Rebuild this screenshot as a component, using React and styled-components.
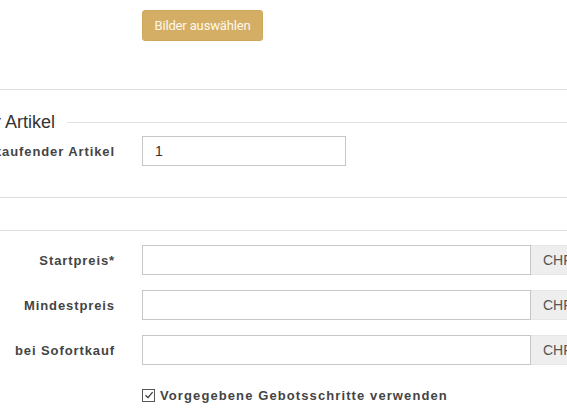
import styled, { createGlobalStyle } from "styled-components";

const GlobalStyle = createGlobalStyle`
  html, body {
    margin: 0;
    padding: 0;
    background: #fff;
    overflow: hidden;
  }
  body {
    font-family: "Liberation Sans", Arial, sans-serif;
    color: #333;
  }
`;

export default function App() {
  return (
    <>
      <GlobalStyle />
      <Page>
        <ButtonRow>
          <GoldButton type="button">Bilder auswählen</GoldButton>
        </ButtonRow>
        <Rule $top={48} />

        <Legend>
          <LegendText>Anzahl der Artikel</LegendText>
          <LegendLine />
        </Legend>
        <FieldRow $top={2}>
          <Label>Anzahl zu verkaufender Artikel</Label>
          <TextInput $width={204} defaultValue="1" />
        </FieldRow>

        <Rule $top={31} />
        <Rule $top={32} />

        <FieldRow $top={14}>
          <Label>Startpreis*</Label>
          <PriceField />
        </FieldRow>
        <FieldRow $top={15}>
          <Label>Mindestpreis</Label>
          <PriceField />
        </FieldRow>
        <FieldRow $top={15}>
          <Label>bei Sofortkauf</Label>
          <PriceField />
        </FieldRow>

        <CheckRow>
          <CheckBox>
            <svg width="10" height="10" viewBox="0 0 10 10">
              <path d="M1.5 5.2 L4 7.6 L8.6 2.2" fill="none" stroke="#333" strokeWidth="1.2" />
            </svg>
          </CheckBox>
          <CheckText>Vorgegebene Gebotsschritte verwenden</CheckText>
        </CheckRow>
      </Page>
    </>
  );
}

function PriceField() {
  return (
    <Group>
      <TextInput $width={389} />
      <Addon>CHF</Addon>
    </Group>
  );
}

const Page = styled.div`
  width: 567px;
  height: 411px;
  padding-top: 10px;
  box-sizing: border-box;
  overflow: hidden;
`;

const ButtonRow = styled.div`
  display: flex;
  padding-left: 142px;
`;

const GoldButton = styled.button`
  width: 121px;
  height: 31px;
  border: 1px solid #cfa75c;
  border-radius: 3px;
  background: #d5ae65;
  color: #fff8ea;
  font-family: Roboto, "Liberation Sans", sans-serif;
  font-size: 13px;
  letter-spacing: -0.15px;
  padding: 0;
`;

const Rule = styled.div`
  height: 1px;
  background: #dedede;
  margin-top: ${(p) => p.$top}px;
`;

const Legend = styled.div`
  display: flex;
  align-items: center;
  height: 24px;
  margin-top: 20px;
  margin-left: -120px;
`;

const LegendText = styled.div`
  width: 175px;
  display: flex;
  justify-content: flex-end;
  white-space: nowrap;
  font-size: 18px;
  color: #333;
`;

const LegendLine = styled.div`
  flex: 1;
  height: 1px;
  margin-left: 12px;
  background: #e2e2e2;
`;

const FieldRow = styled.div`
  display: grid;
  grid-template-columns: 235px auto;
  column-gap: 27px;
  align-items: center;
  margin-left: -120px;
  margin-top: ${(p) => p.$top}px;
`;

const Label = styled.div`
  display: flex;
  justify-content: flex-end;
  white-space: nowrap;
  font-size: 13px;
  font-weight: bold;
  letter-spacing: 0.9px;
  color: #444;
`;

const Group = styled.div`
  display: flex;
  width: 460px;
`;

const TextInput = styled.input`
  width: ${(p) => p.$width}px;
  height: 30px;
  box-sizing: border-box;
  border: 1px solid #c6c6c6;
  padding: 0 12px;
  font-family: "Liberation Sans", Arial, sans-serif;
  font-size: 14px;
  color: #333;
  background: #fff;
  outline: none;
`;

const Addon = styled.div`
  display: flex;
  align-items: center;
  height: 30px;
  box-sizing: border-box;
  padding: 0 12px;
  background: #eeeeee;
  border: 1px solid #e6e6e6;
  border-left: none;
  font-size: 14px;
  color: #555;
  flex: 1;
`;

const CheckRow = styled.div`
  display: flex;
  align-items: center;
  gap: 5px;
  height: 20px;
  margin-top: 20px;
  padding-left: 142px;
`;

const CheckBox = styled.span`
  display: flex;
  align-items: center;
  justify-content: center;
  width: 11px;
  height: 11px;
  border: 1px solid #555;
  background: #fff;
`;

const CheckText = styled.span`
  font-size: 13px;
  font-weight: bold;
  letter-spacing: 1.1px;
  color: #444;
`;
